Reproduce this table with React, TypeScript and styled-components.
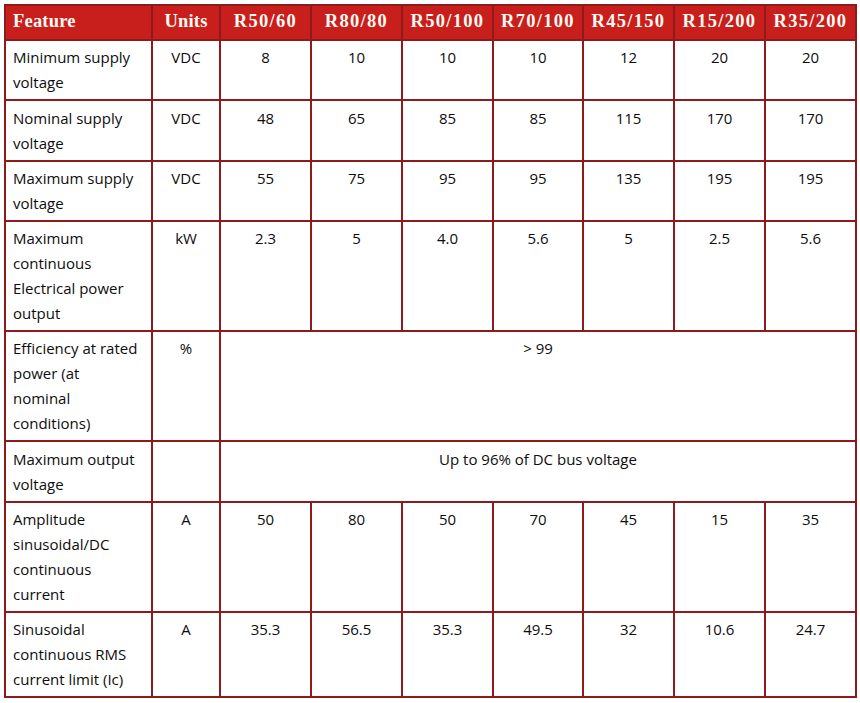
import styled, { createGlobalStyle } from 'styled-components';

const GlobalStyle = createGlobalStyle`
    html, body {
        margin: 0;
        padding: 0;
        background: #ffffff;
    }
    * {
        box-sizing: border-box;
    }
`;

const Page = styled.div`
    padding: 4px 0 0 4px;
`;

const Grid = styled.div`
    display: grid;
    grid-template-columns: 147px 68px 91px 91px 91px 90px 91px 91px 91px;
    width: 853px;
    border-top: 2px solid #8e1b1b;
    border-left: 2px solid #8e1b1b;
`;

const Head = styled.div<{ $left?: boolean; $wide?: boolean }>`
    background: #c81f1c;
    color: #fffaf2;
    font-family: 'Liberation Serif', 'Times New Roman', serif;
    font-weight: 700;
    font-size: 18.5px;
    letter-spacing: ${(p) => (p.$wide ? '1.3px' : '0.2px')};
    line-height: 25px;
    padding: 3px 7px 5px;
    text-align: ${(p) => (p.$left ? 'left' : 'center')};
    border-right: 2px solid #8e1b1b;
    border-bottom: 2px solid #8e1b1b;
    white-space: nowrap;
`;

const Cell = styled.div<{ $left?: boolean; $span?: number }>`
    grid-column: span ${(p) => p.$span ?? 1};
    color: #0d0d0d;
    font-family: 'Open Sans', 'Noto Sans', sans-serif;
    font-size: 15px;
    line-height: 25px;
    padding: 4.25px 7px 4px;
    text-align: ${(p) => (p.$left ? 'left' : 'center')};
    border-right: 2px solid #8e1b1b;
    border-bottom: 2px solid #8e1b1b;
    white-space: nowrap;
`;

const headers = ['Feature', 'Units', 'R50/60', 'R80/80', 'R50/100', 'R70/100', 'R45/150', 'R15/200', 'R35/200'];

type Row = {
    feature: string[];
    unit: string;
    values?: string[];
    spanText?: string;
};

const rows: Row[] = [
    { feature: ['Minimum supply', 'voltage'], unit: 'VDC', values: ['8', '10', '10', '10', '12', '20', '20'] },
    { feature: ['Nominal supply', 'voltage'], unit: 'VDC', values: ['48', '65', '85', '85', '115', '170', '170'] },
    { feature: ['Maximum supply', 'voltage'], unit: 'VDC', values: ['55', '75', '95', '95', '135', '195', '195'] },
    {
        feature: ['Maximum', 'continuous', 'Electrical power', 'output'],
        unit: 'kW',
        values: ['2.3', '5', '4.0', '5.6', '5', '2.5', '5.6'],
    },
    { feature: ['Efficiency at rated', 'power (at', 'nominal', 'conditions)'], unit: '%', spanText: '> 99' },
    { feature: ['Maximum output', 'voltage'], unit: '', spanText: 'Up to 96% of DC bus voltage' },
    {
        feature: ['Amplitude', 'sinusoidal/DC', 'continuous', 'current'],
        unit: 'A',
        values: ['50', '80', '50', '70', '45', '15', '35'],
    },
    {
        feature: ['Sinusoidal', 'continuous RMS', 'current limit (Ic)'],
        unit: 'A',
        values: ['35.3', '56.5', '35.3', '49.5', '32', '10.6', '24.7'],
    },
];

export default function App() {
    return (
        <>
            <GlobalStyle />
            <Page>
                <Grid>
                    {headers.map((h, i) => (
                        <Head key={h} $left={i === 0} $wide={i > 1}>
                            {h}
                        </Head>
                    ))}
                    {rows.map((row, r) => [
                        <Cell key={`f${r}`} $left>
                            {row.feature.map((line, i) => (
                                <div key={i}>{line}</div>
                            ))}
                        </Cell>,
                        <Cell key={`u${r}`}>{row.unit}</Cell>,
                        row.spanText ? (
                            <Cell key={`s${r}`} $span={7}>
                                {row.spanText}
                            </Cell>
                        ) : (
                            row.values!.map((v, i) => <Cell key={`v${r}-${i}`}>{v}</Cell>)
                        ),
                    ])}
                </Grid>
            </Page>
        </>
    );
}
